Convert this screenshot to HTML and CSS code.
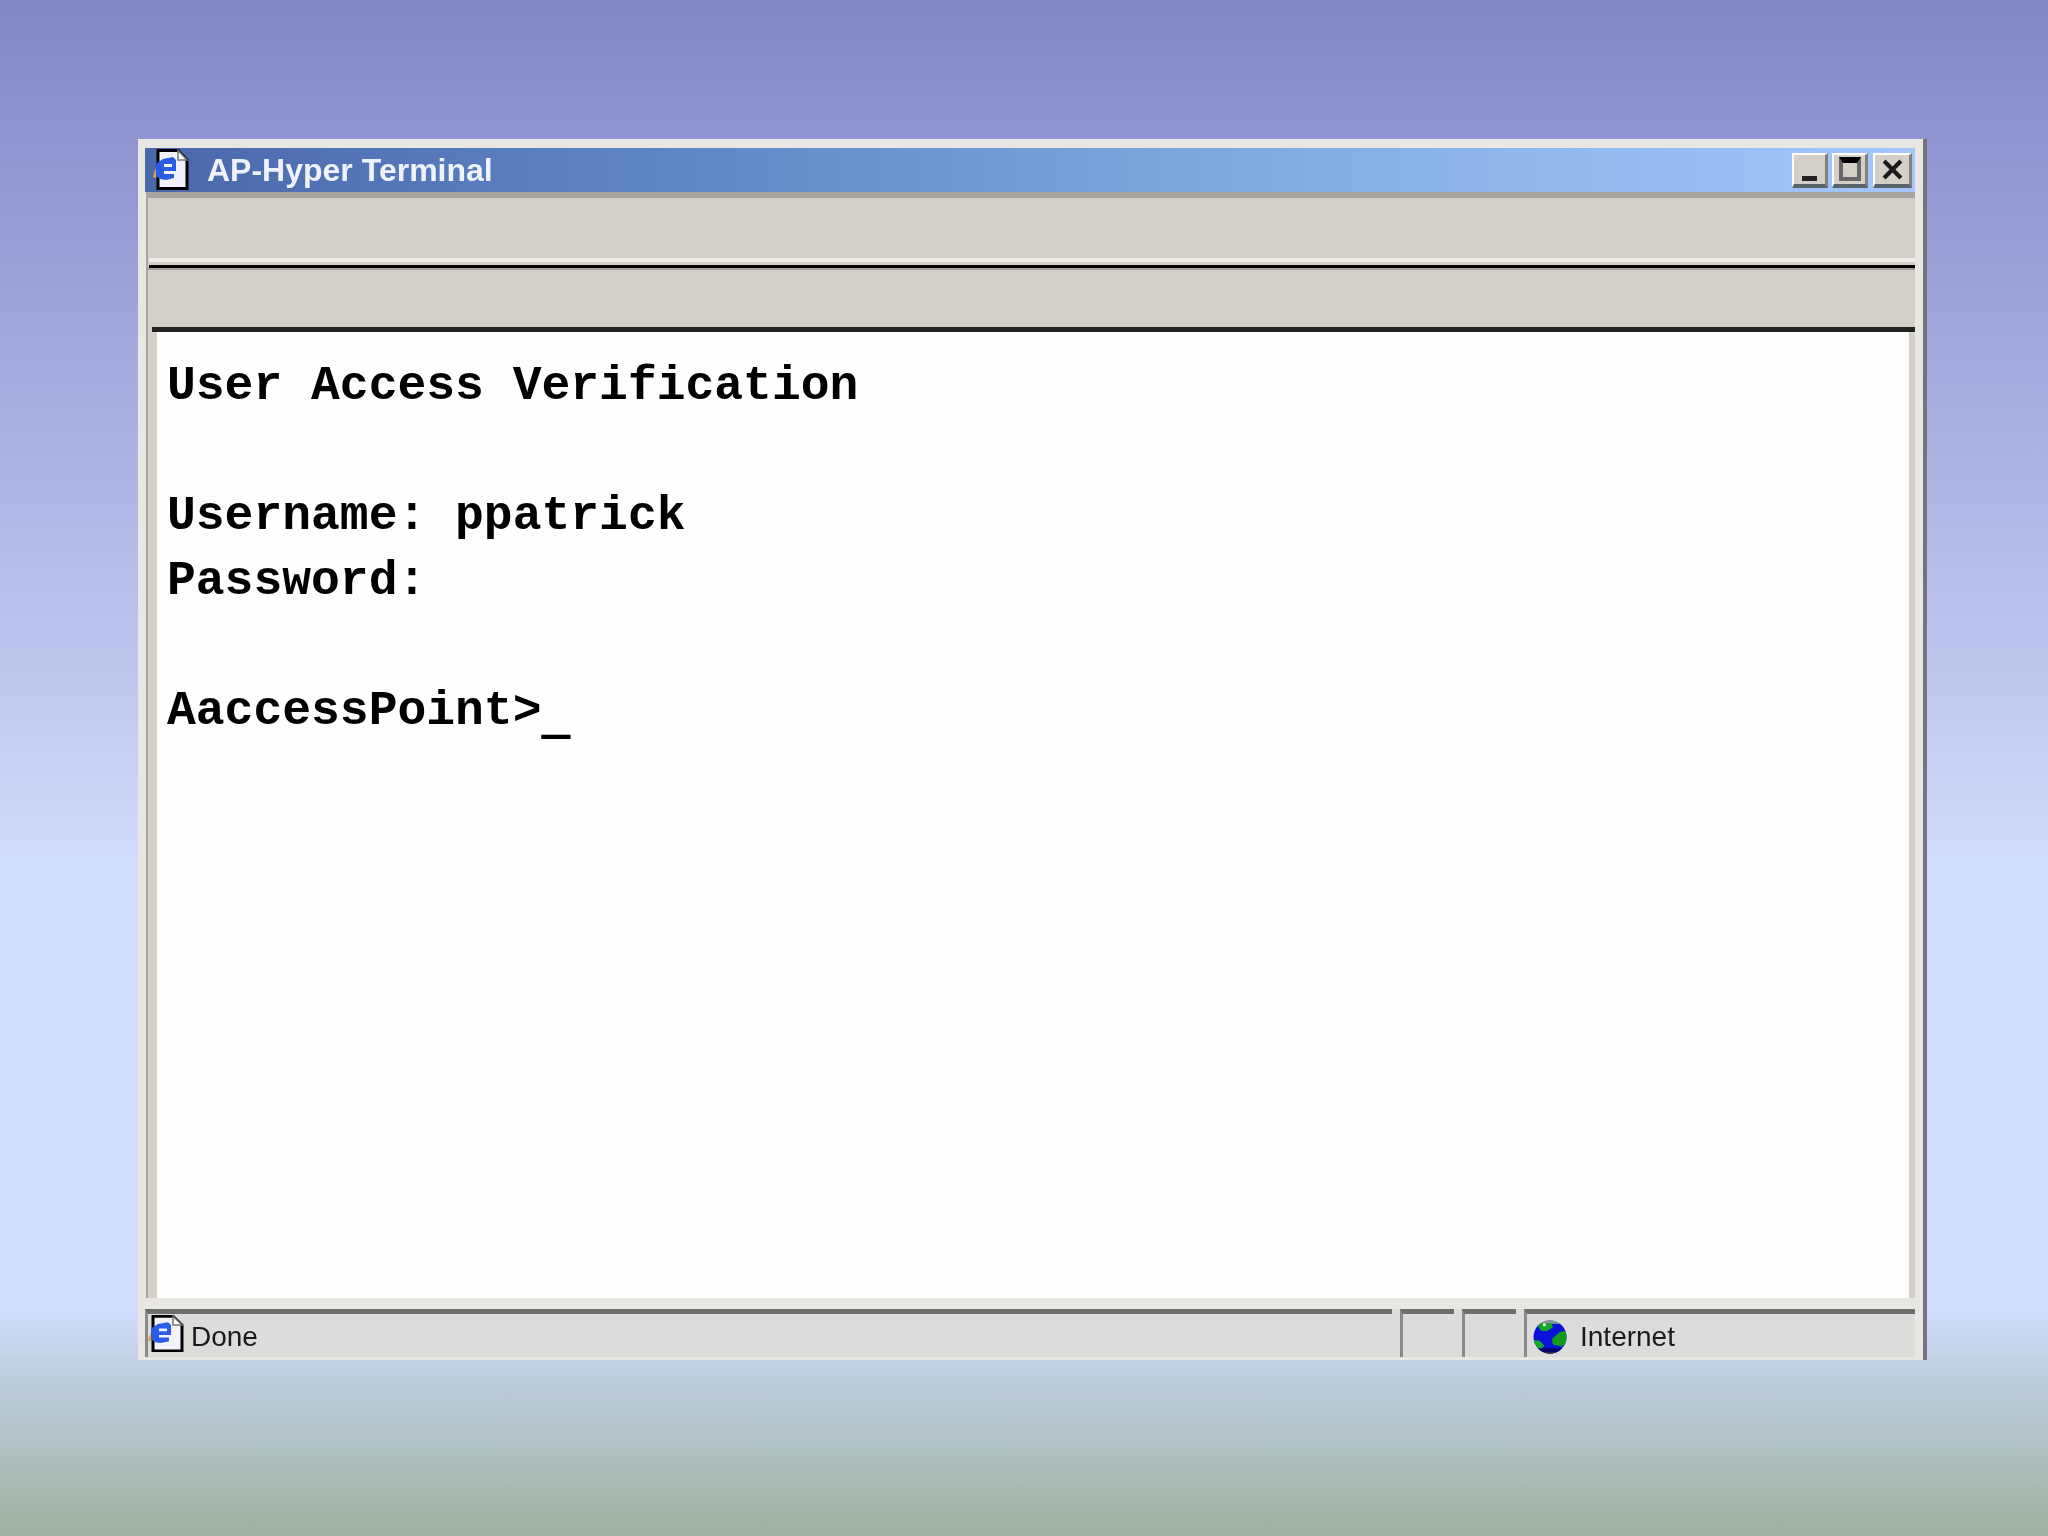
FILE: index.html
```html
<!DOCTYPE html>
<html lang="en">
<head>
<meta charset="utf-8">
<title>AP-Hyper Terminal</title>
<link rel="stylesheet" href="styles.css">
</head>
<body>
<div class="window">
  <header class="titlebar">
    <svg class="page-icon" viewBox="0 0 40 42" aria-hidden="true">
      <path d="M9 1.5H29L38 11V39.5H9Z" fill="#f2f2fa" stroke="#000" stroke-width="3"/>
      <path d="M29 1.5V11H38Z" fill="#fff" stroke="#777" stroke-width="1.5"/>
      <path d="M4 28L6 21L11 17L11 20L8 24L7 29Z" fill="#e2a62e"/>
      <path d="M8 14L14 10L24 8L27 11L27 22H15L15 25H25L25 29L17 31L11 30L7 27L7 18ZM15 15V18H23V15Z" fill="#2a5ce8" fill-rule="evenodd"/>
    </svg>
    <span class="title-text">AP-Hyper Terminal</span>
    <div class="win-buttons">
      <div class="win-btn"><span class="glyph-min"></span></div>
      <div class="win-btn"><span class="glyph-max"></span></div>
      <div class="win-btn win-btn-close">
        <svg class="glyph-close" viewBox="0 0 20 20" aria-hidden="true"><path d="M2 2L18 18M18 2L2 18" stroke="#1a1a1a" stroke-width="4" fill="none"/></svg>
      </div>
    </div>
  </header>
  <div class="toolbar toolbar-first">
    <div class="rule-light"></div>
    <div class="rule-dark"></div>
  </div>
  <div class="toolbar toolbar-second">
    <div class="rule-heavy"></div>
  </div>
  <div class="viewport">
    <main class="terminal">
      <p class="line">User Access Verification</p>
      <p class="line">&nbsp;</p>
      <p class="line">Username: ppatrick</p>
      <p class="line">Password:</p>
      <p class="line">&nbsp;</p>
      <p class="line">AaccessPoint&gt;<span class="cursor">_</span></p>
    </main>
  </div>
  <footer class="statusbar">
    <div class="pane pane-main">
      <svg class="page-icon page-icon-status" viewBox="0 0 40 42" preserveAspectRatio="none" aria-hidden="true">
        <path d="M9 1.5H29L38 11V39.5H9Z" fill="#f2f2fa" stroke="#000" stroke-width="3"/>
        <path d="M29 1.5V11H38Z" fill="#fff" stroke="#777" stroke-width="1.5"/>
        <path d="M4 28L6 21L11 17L11 20L8 24L7 29Z" fill="#e2a62e"/>
        <path d="M8 14L14 10L24 8L27 11L27 22H15L15 25H25L25 29L17 31L11 30L7 27L7 18ZM15 15V18H23V15Z" fill="#2a5ce8" fill-rule="evenodd"/>
      </svg>
      <span>Done</span>
    </div>
    <div class="pane pane-small"></div>
    <div class="pane pane-small"></div>
    <div class="pane pane-zone">
      <svg class="globe" viewBox="0 0 36 36" aria-hidden="true">
        <defs><clipPath id="globe-disc"><circle cx="18" cy="18" r="17.5"/></clipPath></defs>
        <g clip-path="url(#globe-disc)">
          <rect width="36" height="36" fill="#0a12dc"/>
          <rect width="36" height="4" fill="#8a9a8a"/>
          <path d="M5 6L10 3L20 4L21 8L14 12L8 11Z" fill="#14a81e"/>
          <circle cx="12" cy="5" r="1.8" fill="#e6f6e6"/>
          <path d="M21 26L20 20L28 13L36 11V24L30 28Z" fill="#129a1c"/>
          <path d="M0 21L7 22L12 27L9 31L4 30L0 26Z" fill="#18a826"/>
          <rect y="30" width="36" height="6" fill="#05056a"/>
          <rect y="34" width="36" height="2" fill="#30303c"/>
        </g>
      </svg>
      <span>Internet</span>
    </div>
  </footer>
</div>
</body>
</html>
```
FILE: styles.css
```css
* { box-sizing: border-box; }
html, body { height: 100%; }
body {
  margin: 0;
  padding: 139px 0 0 138px;
  background: linear-gradient(180deg, #8286c4 0%, #8f93d0 8%, #a6acdd 25%, #c5ccf2 47%, #d2dcfd 56%, #d2dcfd 85.5%, #c4d1e4 88.5%, #9fb09f 100%);
  font-family: "Liberation Sans", Arial, sans-serif;
}
.window {
  width: 1789px;
  height: 1221px;
  display: flex;
  flex-direction: column;
  background: #e8e7e3;
  padding: 9px 8px 3px 7px;
  border-right: 4px solid #74747a;
  filter: blur(0.5px);
}
.titlebar {
  flex: 0 0 44px;
  display: flex;
  align-items: center;
  padding-left: 4px;
  background: linear-gradient(90deg, #4a68ac 0%, #6389c8 33%, #86aee2 66%, #a4c6fb 100%);
}
.page-icon { width: 40px; height: 42px; flex: none; }
.title-text {
  margin-left: 18px;
  color: #f0f2fa;
  font-size: 32px;
  font-weight: 700;
}
.win-buttons {
  margin-left: auto;
  display: flex;
  gap: 4px;
  padding-right: 3px;
}
.win-btn {
  width: 36px;
  height: 35px;
  display: flex;
  align-items: center;
  justify-content: center;
  background: #d4d0c8;
  border-top: 2px solid #fff;
  border-left: 2px solid #fff;
  border-right: 3px solid #808080;
  border-bottom: 4px solid #5c626c;
}
.win-btn-close { width: 39px; margin-left: 1px; }
.glyph-min { width: 15px; height: 5px; background: #222; align-self: flex-end; margin: 0 0 3px 0; }
.glyph-max { width: 22px; height: 24px; border: 4px solid #666; border-top: 6px solid #000; }
.glyph-close { width: 21px; height: 21px; }
.toolbar {
  display: flex;
  flex-direction: column;
  justify-content: flex-end;
  margin-left: 1px;
  background: #d4d0c8;
  border-left: 2px solid #a8a6a2;
}
.toolbar-first {
  flex: 0 0 76px;
  border-top: 6px solid #a8a4a0;
  padding-left: 1px;
}
.rule-light { height: 4px; margin-bottom: 3px; background: #eeece8; }
.rule-dark { height: 3px; background: #000; }
.toolbar-second {
  flex: 0 0 64px;
  border-top: 2px solid #a09c98;
  padding-left: 4px;
}
.rule-heavy { height: 5px; background: #222; }
.viewport {
  flex: 1;
  min-height: 0;
  display: flex;
  margin-left: 1px;
  padding: 0 6px 0 9px;
  background: #d4d0c8;
  border-left: 2px solid #a8a6a2;
}
.terminal {
  flex: 1;
  padding: 22px 0 0 10px;
  background: #fefefc;
  color: #000;
  font-family: "Liberation Mono", "Courier New", monospace;
  font-weight: 700;
  font-size: 48px;
  line-height: 65px;
}
.line { margin: 0; white-space: pre; }
.cursor { vertical-align: -8px; line-height: 1; text-shadow: 0 1px 0 #000, 0 2px 0 #000; }
.statusbar {
  flex: 0 0 48px;
  margin-top: 11px;
  display: flex;
  gap: 8px;
  background: #dcdcda;
  color: #1a1a1a;
  font-size: 28px;
}
.pane {
  display: flex;
  align-items: center;
  border-top: 5px solid #6e6e6e;
  border-left: 3px solid #8a8a8a;
  padding-top: 2px;
}
.pane-main { flex: 0 0 1247px; }
.pane-main span { margin-left: 7px; }
.page-icon-status { height: 38px; margin: -5px 0 0 -4px; }
.pane-small { flex: 0 0 54px; }
.pane-zone { flex: 1; padding-left: 6px; }
.pane-zone span { margin-left: 13px; }
.globe { width: 34px; height: 34px; flex: none; }
```
